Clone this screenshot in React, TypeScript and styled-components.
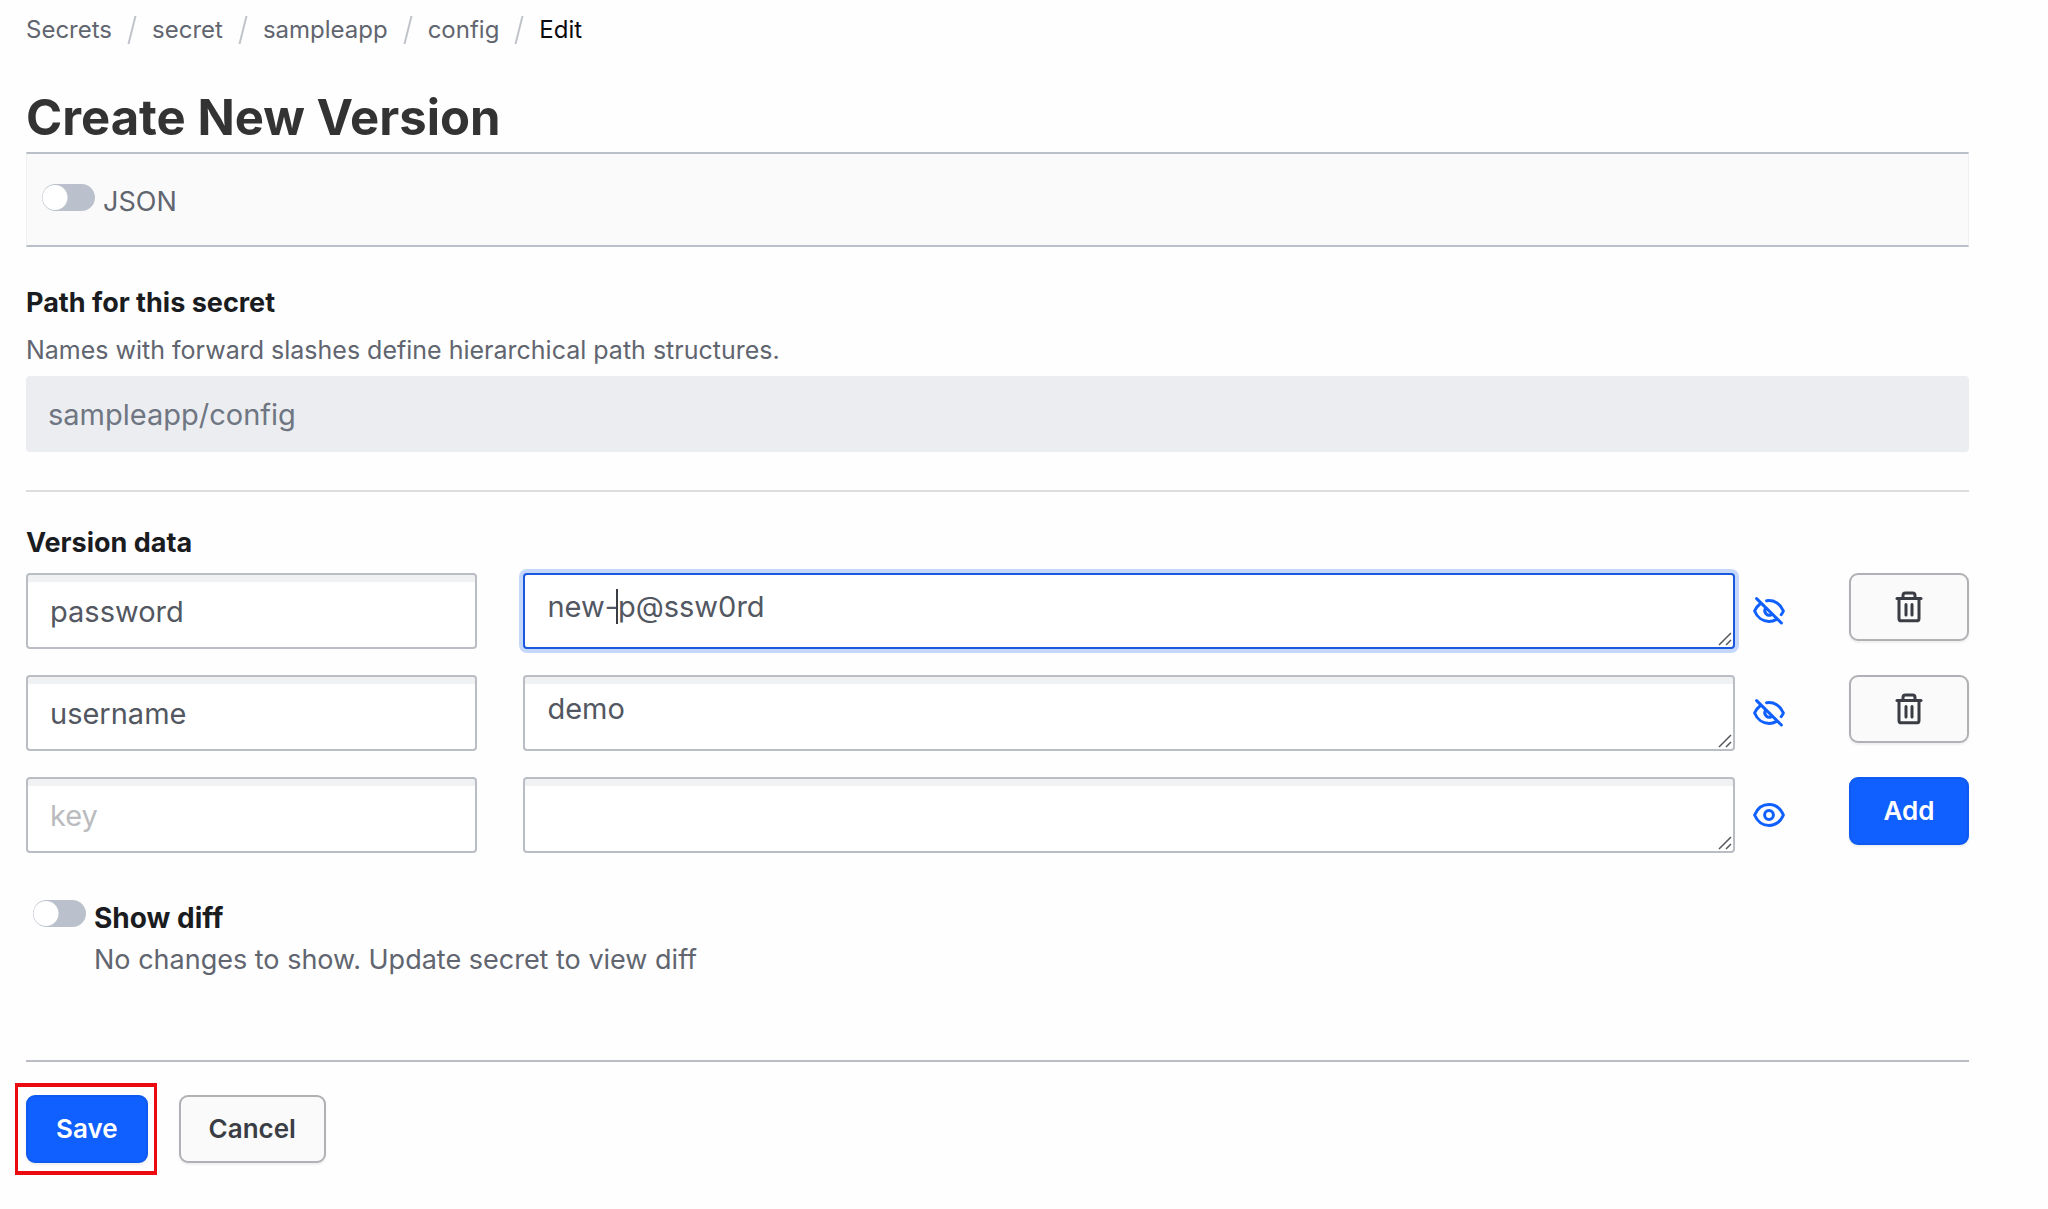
import React, { useState } from "react";
import styled, { createGlobalStyle, css } from "styled-components";

const GlobalStyle = createGlobalStyle`
  *, *::before, *::after { box-sizing: border-box; }
  body {
    margin: 0;
    background: #fefefe;
    color: #61656f;
    font-family: Inter, "Liberation Sans", sans-serif;
    font-size: 26px;
    line-height: 36px;
  }
`;

const Page = styled.main`
  padding: 12px 79px 36px 26px;
`;

const Trail = styled.ol`
  display: flex;
  align-items: center;
  margin: 0;
  padding: 0;
  list-style: none;
  font-size: 24px;
`;

const Crumb = styled.li`
  display: flex;
  align-items: center;

  & + &::before {
    content: "";
    width: 2px;
    height: 28px;
    margin: 0 19px;
    background: #bfc2c9;
    transform: skewX(-14deg);
  }
`;

const CrumbLink = styled.a`
  color: #61656f;
  text-decoration: none;

  &[aria-current] {
    color: #0c0c0e;
  }
`;

const Title = styled.h1`
  margin: 36px 0 0;
  color: #333333;
  font-size: 49px;
  font-weight: 700;
  line-height: 68px;
`;

const Toolbar = styled.div`
  display: flex;
  align-items: center;
  height: 95px;
  padding: 4px 15px 0;
  background: #fafafa;
  border: 2px solid #bbbfca;
  border-left-color: #eff0f3;
  border-right-color: #eff0f3;
  border-width: 2px 1px;
`;

const Switch = styled.input`
  appearance: none;
  flex: none;
  width: 53px;
  height: 27px;
  margin: 0;
  border-radius: 14px;
  background: radial-gradient(circle at 13px 50%, #ffffff 12px, #bac1cc 13px);

  &:checked {
    background: radial-gradient(circle at 40px 50%, #ffffff 12px, #1060ff 13px);
  }
`;

const SwitchRow = styled.div`
  display: flex;
  align-items: flex-start;
  gap: 8px;
`;

const SwitchText = styled.label<{ $strong?: boolean }>`
  display: block;
  font-size: 27px;
  ${(p) => p.$strong && css`color: #1a1c1f; font-size: 28px; font-weight: 700;`}
`;

const Heading = styled.label`
  display: block;
  color: #1a1c1f;
  font-size: 27px;
  font-weight: 700;
`;

const PathField = styled.div`
  margin-top: 38px;
`;

const Help = styled.p`
  margin: 11px 0 8px;
  font-size: 25px;
`;

const fieldBox = css`
  display: block;
  width: 100%;
  height: 76px;
  border: 2px solid #babdc4;
  border-radius: 4px;
  background: #ffffff;
  box-shadow: inset 0 8px 1px -1px #f0f1f2;
  color: #525761;
  font: inherit;
  font-size: 29px;
  line-height: 40px;
  outline: none;
`;

const PathInput = styled.input`
  ${fieldBox}
  padding: 0 20px;
  border-color: #ebedf1;
  background: #ebedf1;
  box-shadow: none;
  color: #6f7682;
`;

const Divider = styled.hr<{ $dark?: boolean }>`
  height: 2px;
  margin: 38px 0 33px;
  border: 0;
  background: ${(p) => (p.$dark ? "#babdc4" : "#dbdcde")};
`;

const Rows = styled.div`
  display: grid;
  gap: 26px;
  margin-top: 12px;
`;

const Row = styled.div`
  display: flex;
  align-items: flex-start;
`;

const KeyBox = styled.div`
  flex: 19 1 0;
  min-width: 0;
  margin-right: 46px;
`;

const KeyInput = styled.input`
  ${fieldBox}
  padding: 0 22px;

  &::placeholder {
    color: #b9bbbe;
    opacity: 1;
  }
`;

const ValueBox = styled.div`
  position: relative;
  flex: 51 1 0;
  min-width: 0;
`;

const ValueInput = styled.textarea<{ $active: boolean }>`
  ${fieldBox}
  padding: 12px 22px;
  resize: vertical;

  &::-webkit-resizer {
    background: transparent;
  }

  ${(p) =>
    p.$active &&
    css`
      border-color: #1a58dd;
      box-shadow: 0 0 0 4px #c5d7fb;
      caret-color: transparent;
    `}
`;

const Caret = styled.span`
  position: absolute;
  top: 16px;
  left: 93px;
  width: 2px;
  height: 35px;
  background: #3b3d45;
`;

const Grip = styled.svg`
  position: absolute;
  right: 3px;
  bottom: 3px;
  pointer-events: none;
`;

const EyeButton = styled.button`
  display: flex;
  flex: none;
  align-items: center;
  width: 114px;
  height: 76px;
  padding: 0 0 0 18px;
  border: 0;
  background: none;
  color: #1060ff;
`;

const Button = styled.button<{ $primary?: boolean }>`
  display: flex;
  flex: none;
  align-items: center;
  justify-content: center;
  height: 68px;
  padding: 0 28px;
  border: 2px solid ${(p) => (p.$primary ? "#0f5af0" : "#afb1b4")};
  border-radius: 9px;
  background: ${(p) => (p.$primary ? "#1060ff" : "#fafafa")};
  box-shadow: 0 2px 2px rgba(60, 65, 80, 0.08);
  color: ${(p) => (p.$primary ? "#ffffff" : "#3b3d45")};
  font: inherit;
  font-weight: 600;
`;

const RowButton = styled(Button)`
  width: 120px;
`;

const DiffRow = styled(SwitchRow)`
  margin-top: 47px;
  padding-left: 7px;
`;

const DiffNote = styled.p`
  margin: 6px 0 0;
  font-size: 27px;
`;

const Actions = styled.div`
  display: flex;
  gap: 31px;
`;

const Highlight = styled.div`
  margin: -12px -9px -12px -11px;
  padding: 8px 6px 8px 8px;
  border: solid #ea0a10;
  border-width: 4px 3px;
`;

const Footer = styled.div`
  margin-top: 82px;
`;

const EyeIcon = () => (
  <svg width="32" height="32" viewBox="0 0 16 16" fill="none" stroke="currentColor" strokeWidth="1.5">
    <path d="M.8 8C2.300 4.500 5 2.800 8 2.800S13.700 4.500 15.200 8C13.700 11.500 11 13.200 8 13.200S2.300 11.500.8 8z" strokeLinejoin="round" />
    <circle cx="8" cy="8" r="2.200" />
  </svg>
);

const EyeOffIcon = () => (
  <svg width="32" height="32" viewBox="0 0 16 16" fill="none" stroke="currentColor" strokeWidth="1.500" strokeLinecap="round" strokeLinejoin="round">
    <path d="M1.800 1.800L14.200 14" />
    <path d="M3.500 4.500C2.300 5.400 1.300 6.600.8 8c1.300 3.200 4.100 5.200 7.200 5.200 1.300 0 2.500-.3 3.500-.9" />
    <path d="M6.800 2.900C10.500 2.300 13.700 4.400 15.200 8c-.3.700-.7 1.300-1.100 1.800" />
    <path d="M6.200 6.800A2.200 2.200 0 0 0 9.200 9.800" />
  </svg>
);

const TrashIcon = () => (
  <svg width="32" height="32" viewBox="0 0 16 16" fill="none" stroke="currentColor" strokeWidth="1.500" strokeLinecap="round" strokeLinejoin="round">
    <path d="M2 3.800h12" />
    <path d="M5 3.600V2.200C5 1.500 5.500 1 6.200 1h3.600c.7 0 1.200.5 1.200 1.200v1.400" />
    <path d="M3 4v9.700c0 .7.500 1.200 1.200 1.200h7.600c.7 0 1.200-.5 1.200-1.200V4" />
    <path d="M6.500 6.800v5.200M9.500 6.800v5.200" />
  </svg>
);

const crumbs = ["Secrets", "secret", "sampleapp", "config", "Edit"];

const initialPairs = [
  { key: "password", value: "new-p@ssw0rd", active: true },
  { key: "username", value: "demo" },
  { key: "", value: "", isNew: true },
];

export default function App() {
  const [pairs, setPairs] = useState(initialPairs);
  const update = (index: number, change: { key?: string; value?: string }) =>
    setPairs(pairs.map((pair, i) => (i === index ? { ...pair, ...change } : pair)));

  return (
    <Page>
      <GlobalStyle />
      <nav aria-label="Breadcrumb">
        <Trail>
          {crumbs.map((name, i) => (
            <Crumb key={name}>
              <CrumbLink href="#" aria-current={i === crumbs.length - 1 ? "page" : undefined}>
                {name}
              </CrumbLink>
            </Crumb>
          ))}
        </Trail>
      </nav>
      <Title>Create New Version</Title>
      <Toolbar>
        <SwitchRow>
          <Switch type="checkbox" id="json" />
          <SwitchText htmlFor="json">JSON</SwitchText>
        </SwitchRow>
      </Toolbar>

      <PathField>
        <Heading htmlFor="path">Path for this secret</Heading>
        <Help>Names with forward slashes define hierarchical path structures.</Help>
        <PathInput id="path" readOnly value="sampleapp/config" />
      </PathField>
      <Divider />

      <Heading htmlFor="key-0">Version data</Heading>
      <Rows>
        {pairs.map((pair, i) => (
          <Row key={i}>
            <KeyBox>
              <KeyInput
                id={`key-${i}`}
                aria-label="Key"
                placeholder="key"
                value={pair.key}
                onChange={(e) => update(i, { key: e.target.value })}
              />
            </KeyBox>
            <ValueBox>
              <ValueInput
                aria-label="Value"
                rows={1}
                $active={Boolean(pair.active)}
                value={pair.value}
                onChange={(e) => update(i, { value: e.target.value })}
              />
              {pair.active && <Caret />}
              <Grip width="14" height="14" viewBox="0 0 14 14" stroke="#55575c" strokeWidth="1.500">
                <path d="M1 13L13 1M8 13l5-5" />
              </Grip>
            </ValueBox>
            <EyeButton type="button" aria-label="Toggle value">
              {pair.isNew ? <EyeIcon /> : <EyeOffIcon />}
            </EyeButton>
            {pair.isNew ? (
              <RowButton type="button" $primary>Add</RowButton>
            ) : (
              <RowButton type="button" aria-label="Delete row">
                <TrashIcon />
              </RowButton>
            )}
          </Row>
        ))}
      </Rows>

      <DiffRow>
        <Switch type="checkbox" id="diff" />
        <div>
          <SwitchText htmlFor="diff" $strong>Show diff</SwitchText>
          <DiffNote>No changes to show. Update secret to view diff</DiffNote>
        </div>
      </DiffRow>

      <Footer>
        <Divider $dark />
        <Actions>
          <Highlight>
            <Button type="submit" $primary>Save</Button>
          </Highlight>
          <Button type="button">Cancel</Button>
        </Actions>
      </Footer>
    </Page>
  );
}
